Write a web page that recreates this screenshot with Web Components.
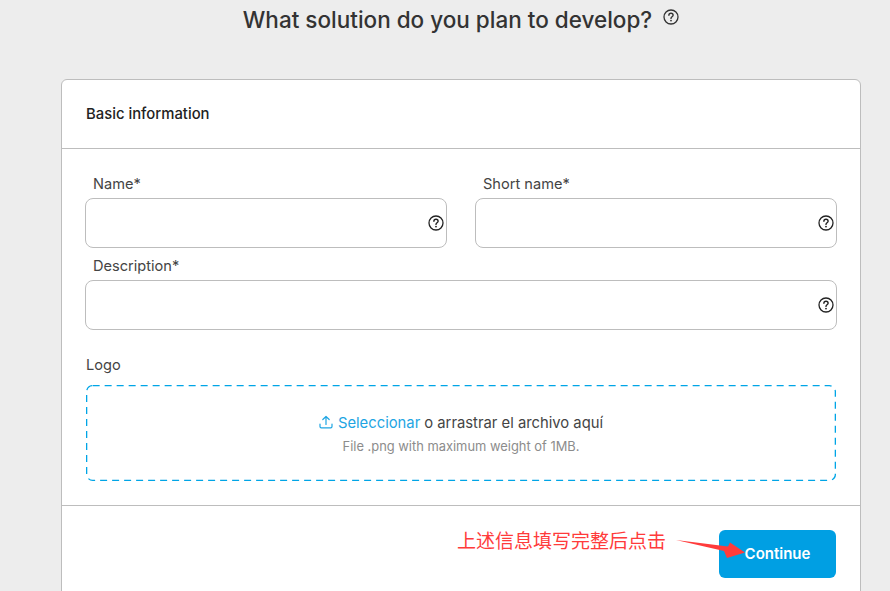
<!DOCTYPE html>
<html>
<head>
<meta charset="utf-8">
<style>
html,body{margin:0;height:591px;overflow:hidden;background:#ededed;font-family:Inter,"Liberation Sans",sans-serif}
</style>
</head>
<body>
<wizard-page></wizard-page>
<script>
const helpIcon = (size, color) => `<svg width="${size}" height="${size}" viewBox="0 0 16 16" fill="none"><circle cx="8" cy="8" r="7" stroke="${color}" stroke-width="1.3"/><path d="M5.9 6.2C5.9 5 6.9 4.3 8 4.3c1.2 0 2.1.8 2.1 1.9 0 1.6-2.1 1.6-2.1 3.2" stroke="${color}" stroke-width="1.4" stroke-linecap="round"/><circle cx="8" cy="11.6" r=".9" fill="${color}"/></svg>`;

customElements.define('form-field', class extends HTMLElement {
  static get observedAttributes(){ return ['label']; }
  constructor(){ super(); this.attachShadow({mode:'open'}); }
  connectedCallback(){
    this.shadowRoot.innerHTML = `
    <style>
:host{ display:block; }
label{
  display:block;
  height:20px;
  line-height:20px;
  margin:0 0 4px 8px;
  font-size:14.6px;
  color:#444;
}
.box{
  height:50px;
  box-sizing:border-box;
  border:1px solid #bdbdbd;
  border-radius:8px;
  background:#fff;
  display:flex;
  align-items:center;
  justify-content:flex-end;
  padding-right:2px;
}
svg{ display:block; }
    </style>
    <label>${this.getAttribute('label')}</label>
    <div class="box">${helpIcon(16,'#222')}</div>
    `;
  }
});

customElements.define('logo-drop', class extends HTMLElement {
  constructor(){ super(); this.attachShadow({mode:'open'}); }
  connectedCallback(){
    this.shadowRoot.innerHTML = `
    <style>
:host{ display:block; }
label{
  display:block;
  height:20px;
  line-height:20px;
  font-size:14.6px;
  color:#444;
  margin-bottom:10px;
  margin-left:1px;
}
.zone{
  margin-left:1px;
  margin-right:1px;
  height:96px;
  box-sizing:border-box;
  border-radius:6px;
  position:relative;
  display:flex;
  flex-direction:column;
  align-items:center;
  justify-content:center;
}
.dash{ position:absolute; inset:0; width:100%; height:100%; }
.line{ display:flex; align-items:center; font-size:14.8px; color:#444; height:22px; padding-top:2px; box-sizing:border-box; }
.line svg{ margin-right:5px; margin-top:-2px; }
.line a{ color:#1ea5e3; margin-right:4px; }
small{ font-size:12.9px; color:#8c8c8c; margin-top:5px; height:18px; line-height:18px; }
    </style>
    <label>Logo</label>
    <div class="zone">
      <svg class="dash" viewBox="0 0 750 96" fill="none"><rect x=".65" y=".65" width="748.7" height="94.7" rx="6" stroke="#00a5e6" stroke-width="1.3" stroke-dasharray="7 5"/></svg>
      <div class="line">
        <svg width="14" height="14" viewBox="0 0 14 14" fill="none" stroke="#1ea5e3" stroke-width="1.2" stroke-linecap="round" stroke-linejoin="round"><path d="M7 9.5V1.5M3.8 4.5 7 1.5l3.2 3"/><path d="M1 9v2.5c0 .8.6 1.3 1.3 1.3h9.4c.7 0 1.3-.5 1.3-1.3V9"/></svg>
        <a>Seleccionar</a><span>o arrastrar el archivo aquí</span>
      </div>
      <small>File .png with maximum weight of 1MB.</small>
    </div>
    `;
  }
});

customElements.define('step-note', class extends HTMLElement {
  constructor(){ super(); this.attachShadow({mode:'open'}); }
  connectedCallback(){
    this.shadowRoot.innerHTML = `
    <style>
:host{ position:absolute; left:396px; top:20px; width:300px; height:40px; display:block; }
span{
  position:absolute; left:-1px; top:0;
  font:400 19px/28px "Noto Sans CJK SC",sans-serif;
  color:#ff3b3b;
  white-space:nowrap;
}
svg{ position:absolute; left:0; top:0; overflow:visible; }
    </style>
    <span>上述信息填写完整后点击</span>
    <svg width="300" height="40"><polygon points="218,14 270,20.5 272,16.5 287,26.5 269,32 266,25" fill="#ff3b3b"/></svg>
    `;
  }
});

customElements.define('wizard-page', class extends HTMLElement {
  constructor(){ super(); this.attachShadow({mode:'open'}); }
  connectedCallback(){
    this.shadowRoot.innerHTML = `
    <style>
:host{ display:block; }
*{ box-sizing:border-box; }
header{
  height:79px;
  display:flex;
  justify-content:center;
  padding-left:32px;
}
h1{
  margin:4px 0 0;
  height:30px;
  line-height:31px;
  font-size:22.5px;
  font-weight:500;
  color:#333;
  display:flex;
  gap:11px;
}
h1 svg{ margin-top:5px; }
.card{
  width:800px;
  height:600px;
  margin-left:61px;
  border:1px solid #bdbdbd;
  border-radius:6px 6px 0 0;
  background:#fff;
}
.head{
  height:68px;
  border-bottom:1px solid #bdbdbd;
  box-sizing:content-box;
  padding-left:24px;
  line-height:69px;
  font-size:14.85px;
  font-weight:500;
  color:#222;
}
.body{
  padding:25px 23px 24px;
  border-bottom:1px solid #bdbdbd;
}
.row{ display:grid; grid-template-columns:362px 362px; gap:28px; margin-bottom:8px; }
.wide{ margin-bottom:25px; }
.foot{
  position:relative;
  padding:24px 24px 0;
  display:flex;
  justify-content:flex-end;
}
button{
  width:117px;
  height:48px;
  border:0;
  border-radius:6px;
  background:#009fe3;
  color:#fff;
  font:600 15px Inter,sans-serif;
  padding:0 0 2px;
}
    </style>
    <header><h1>What solution do you plan to develop? ${helpIcon(16,'#333')}</h1></header>
    <section class="card">
      <div class="head">Basic information</div>
      <div class="body">
        <div class="row">
          <form-field label="Name*"></form-field>
          <form-field label="Short name*"></form-field>
        </div>
        <form-field class="wide" label="Description*"></form-field>
        <logo-drop></logo-drop>
      </div>
      <div class="foot">
        <step-note></step-note>
        <button>Continue</button>
      </div>
    </section>
    `;
  }
});
</script>
</body>
</html>
